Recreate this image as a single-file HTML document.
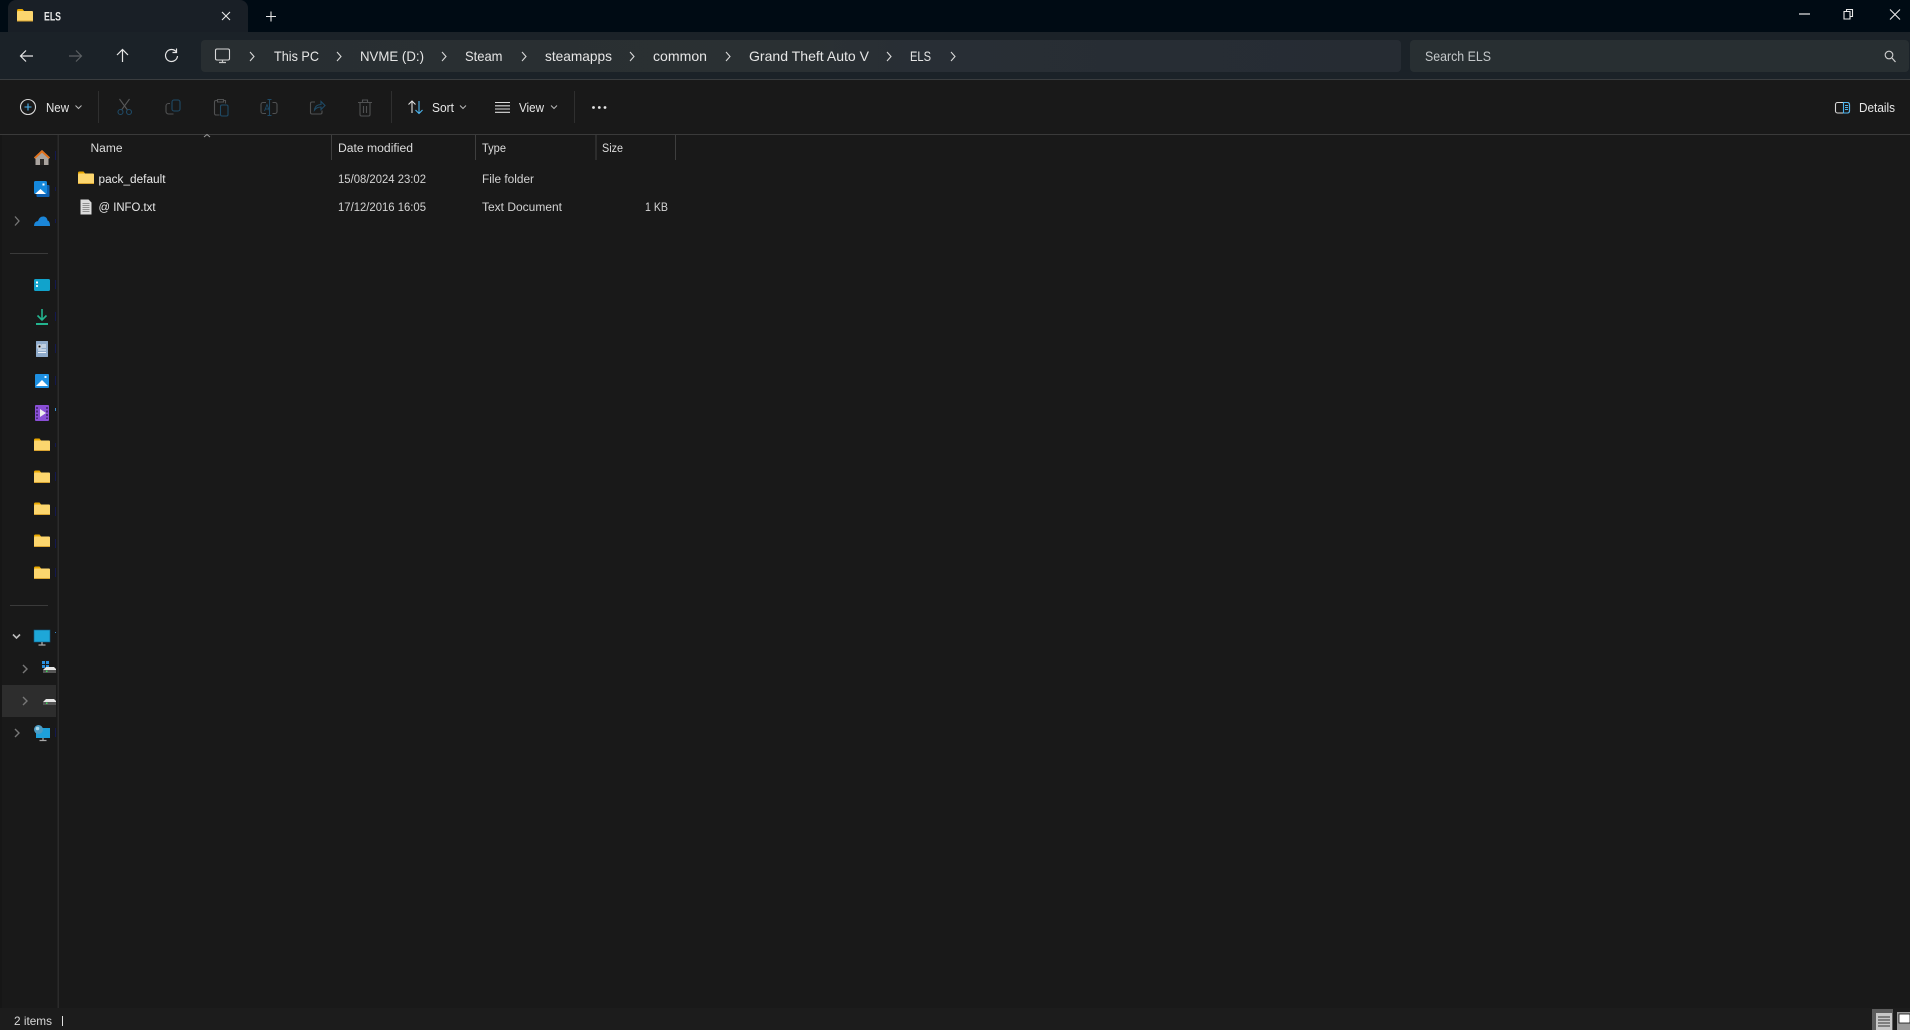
<!DOCTYPE html>
<html><head><meta charset="utf-8"><title>ELS</title>
<style>html,body{margin:0;padding:0;background:#191919;overflow:hidden}svg{display:block}text{font-family:"Liberation Sans",sans-serif}</style></head>
<body>
<svg width="1910" height="1030" viewBox="0 0 1910 1030" xmlns="http://www.w3.org/2000/svg">
<defs>
<g id="f"><path d="M0 2.500a1.500 1.500 0 0 1 1.500-1.500h4l2 2.500H0z" fill="#e9a800"/><rect x="0" y="3" width="16" height="10.500" rx="1" fill="#fcd66e"/><rect x="0" y="12.500" width="16" height="1" fill="#d9a431"/></g>
<path id="c" d="M0 0l4 4.500-4 4.500" fill="none" stroke="#d8d8d8" stroke-width="1.100"/>
<path id="d" d="M0 0l3 3 3-3" fill="none" stroke="#b8b8b8" stroke-width="1"/>
</defs>
<rect width="1910" height="1030" fill="#191919"/>
<rect width="1910" height="32" fill="#000b14"/>
<path d="M8 32V8a8 8 0 0 1 8-8h224a8 8 0 0 1 8 8v24z" fill="#191f26"/>
<use href="#f" x="17" y="8"/>
<text x="44" y="20.500" font-size="12" font-weight="700" fill="#e8e8e8" textLength="17" lengthAdjust="spacingAndGlyphs">ELS</text>
<path d="M222 12l8 8m0-8l-8 8M271 11.500v10M266 16.500h10" stroke="#e8e8e8" stroke-width="1.100" fill="none"/>
<path d="M1799 14h11" stroke="#e8e8e8" stroke-width="1.200"/>
<path d="M1844 11.500h6v7.500h-6zM1846.500 11.500v-2h6v7h-2.500" fill="none" stroke="#e8e8e8" stroke-width="1.100"/>
<path d="M1890 9.500l10 10m0-10l-10 10" stroke="#e8e8e8" stroke-width="1.100"/>

<rect y="32" width="1910" height="47" fill="#1b2228"/>
<rect y="79" width="1910" height="1" fill="#3a3d3f"/>
<path d="M33 56H21m5-5.500L20.500 56l5.500 5.500" fill="none" stroke="#e6e6e6" stroke-width="1.200"/>
<path d="M69 56h12m-5-5.500l5.500 5.500-5.500 5.500" fill="none" stroke="#5c6063" stroke-width="1.200"/>
<path d="M122.500 62V50m-5.500 5l5.500-5.500 5.500 5.500" fill="none" stroke="#e6e6e6" stroke-width="1.200"/>
<path d="M176 51.500a6 6 0 1 0 1.500 4.500M176.500 48.500v4h-4" fill="none" stroke="#e6e6e6" stroke-width="1.200"/>
<defs><linearGradient id="ag" x1="0" x2="1"><stop offset="0" stop-color="#282e31"/><stop offset=".5" stop-color="#2a3033"/><stop offset=".6" stop-color="#282e35"/><stop offset="1" stop-color="#262c33"/></linearGradient></defs>
<rect x="201" y="40" width="1200" height="32" rx="4" fill="url(#ag)"/>
<rect x="1410" y="40" width="499" height="32" rx="4" fill="#282f32"/>
<rect x="215.500" y="49" width="14" height="11" rx="1.500" fill="none" stroke="#d8d8d8" stroke-width="1.100"/>
<path d="M219 62.500h7M222.500 60V62.500" stroke="#c8c8c8" stroke-width="1.200"/>
<use href="#c" x="250" y="52"/><use href="#c" x="337" y="52"/><use href="#c" x="442" y="52"/><use href="#c" x="522" y="52"/><use href="#c" x="630" y="52"/><use href="#c" x="726" y="52"/><use href="#c" x="887" y="52"/><use href="#c" x="951" y="52"/>
<g font-size="14" fill="#e6e6e6">
<text x="274" y="61" textLength="45" lengthAdjust="spacingAndGlyphs">This PC</text>
<text x="360" y="61" textLength="64" lengthAdjust="spacingAndGlyphs">NVME (D:)</text>
<text x="465" y="61" textLength="37.500" lengthAdjust="spacingAndGlyphs">Steam</text>
<text x="545" y="61" textLength="67" lengthAdjust="spacingAndGlyphs">steamapps</text>
<text x="653" y="61" textLength="54" lengthAdjust="spacingAndGlyphs">common</text>
<text x="749" y="61" textLength="120" lengthAdjust="spacingAndGlyphs">Grand Theft Auto V</text>
<text x="910" y="61" textLength="21" lengthAdjust="spacingAndGlyphs">ELS</text>
</g>
<text x="1425" y="61" font-size="14" fill="#c4c8ca" textLength="66" lengthAdjust="spacingAndGlyphs">Search ELS</text>
<circle cx="1889" cy="55" r="3.800" fill="none" stroke="#d0d0d0" stroke-width="1.100"/><path d="M1892 58l3.500 4" stroke="#d0d0d0" stroke-width="1.200"/>

<rect y="134" width="1910" height="1" fill="#3a3a3a"/>
<circle cx="28" cy="107" r="7.500" fill="none" stroke="#d8d8d8" stroke-width="1.100"/><path d="M28 103.500v7M24.500 107h7" stroke="#4db4ee" stroke-width="1.100"/>
<g font-size="12.500" fill="#e6e6e6">
<text x="46" y="112" textLength="23" lengthAdjust="spacingAndGlyphs">New</text>
<text x="432" y="112" textLength="22" lengthAdjust="spacingAndGlyphs">Sort</text>
<text x="519" y="112" textLength="25" lengthAdjust="spacingAndGlyphs">View</text>
<text x="1859" y="112" textLength="36" lengthAdjust="spacingAndGlyphs">Details</text>
</g>
<use href="#d" x="75.500" y="105.500"/><use href="#d" x="460" y="105.500"/><use href="#d" x="551" y="105.500"/>
<path d="M98.500 91v32M391.500 91v32M574.500 91v32" stroke="#2f2f2f"/>
<g fill="none" stroke-width="1.100">
<path d="M119.500 99l8 11M129.500 99l-8 11" stroke="#565758"/><circle cx="120.500" cy="112" r="2.500" stroke="#1f4a66"/><circle cx="129" cy="112" r="2.500" stroke="#1f4a66"/>
<rect x="172" y="100" width="8" height="11" rx="2" stroke="#1f4a66"/><path d="M170 103.500h-1.500a2.500 2.500 0 0 0-2.500 2.500v5.500a2.500 2.500 0 0 0 2.500 2.500h5" stroke="#505152"/>
<path d="M217.500 100.500h-1.500a1.500 1.500 0 0 0-1.500 1.500v11.500a1.500 1.500 0 0 0 1.500 1.500h3.500M224 100.500h1.500v3M217.500 99.500h6v2.500h-6z" stroke="#505152"/><rect x="220.500" y="105" width="7.500" height="11" rx="1.500" stroke="#1f4a66"/>
<path d="M266 102.500h-3a2 2 0 0 0-2 2v7a2 2 0 0 0 2 2h3M272.500 102.500h2.500a2 2 0 0 1 2 2v7a2 2 0 0 1-2 2h-2.500" stroke="#505152"/><path d="M269.500 99.500v16M267.500 99.500h4M267.500 115.500h4" stroke="#1f4a66"/>
<path d="M264.500 111l2.500-6.500 2.500 6.500M265.300 109h3.500" stroke="#1f4a66" stroke-width=".9"/>
<path d="M315 102h-3a1.500 1.500 0 0 0-1.500 1.500v9a1.500 1.500 0 0 0 1.500 1.500h8.500a1.500 1.500 0 0 0 1.500-1.500v-2" stroke="#505152"/><path d="M314.500 110c.5-4 3.500-5.500 6.500-5.500v-3l4 4-4 4v-2.500c-3 0-5 1-6.500 3z" stroke="#1f4a66"/>
<path d="M358 102.500h14M362.500 102.500v-2.500h5v2.500M360 103v11.500a1.500 1.500 0 0 0 1.500 1.500h7a1.500 1.500 0 0 0 1.500-1.500V103M363.500 106v7M366.500 106v7" stroke="#505152"/>
</g>
<path d="M412 113v-12m-3.500 3.500l3.500-3.500 3.500 3.500" fill="none" stroke="#e0e0e0" stroke-width="1.100"/>
<path d="M419 101v12.500m-3.500-3.500l3.500 3.500 3.500-3.500" fill="none" stroke="#4db4ee" stroke-width="1.100"/>
<path d="M495 102.500h15M495 105.800h15M495 109h15M495 112.300h15" stroke="#dcdcdc" stroke-width="1.100"/>
<g fill="#e6e6e6"><circle cx="593.500" cy="107.500" r="1.400"/><circle cx="599.300" cy="107.500" r="1.400"/><circle cx="605" cy="107.500" r="1.400"/></g>
<rect x="1835.500" y="102.500" width="14" height="10.500" rx="2" fill="none" stroke="#d8d8d8" stroke-width="1.100"/>
<path d="M1843.500 102.500h4a2 2 0 0 1 2 2v6.500a2 2 0 0 1-2 2h-4zM1845 105.500h3M1845 107.500h3M1845 109.500h3" fill="none" stroke="#4db4ee" stroke-width="1.100"/>

<!-- header -->
<path d="M204 137l3-2.500 3 2.500" fill="none" stroke="#9a9a9a" stroke-width="1"/>
<path d="M331.500 135v25M475.500 135v25M596 135v25M675.500 135v25" stroke="#3e3e3e"/>
<g font-size="11.500" fill="#dcdcdc">
<text x="90.500" y="152" textLength="32" lengthAdjust="spacingAndGlyphs">Name</text>
<text x="338" y="152" textLength="75" lengthAdjust="spacingAndGlyphs">Date modified</text>
<text x="482" y="152" textLength="24" lengthAdjust="spacingAndGlyphs">Type</text>
<text x="602" y="152" textLength="21" lengthAdjust="spacingAndGlyphs">Size</text>
</g>
<use href="#f" x="78" y="170.500"/>
<path d="M80.500 199.500h8l3 3v12h-11z" fill="#dcdcdc"/><path d="M82.500 203.500h7M82.500 205.500h7M82.500 207.500h7M82.500 209.500h7M82.500 211.500h7" stroke="#777" stroke-width=".7"/>
<g font-size="11.500">
<text x="98.500" y="183" fill="#eaeaea" textLength="67" lengthAdjust="spacingAndGlyphs">pack_default</text>
<text x="98.500" y="211" fill="#eaeaea" textLength="57" lengthAdjust="spacingAndGlyphs">@ INFO.txt</text>
<g fill="#d4d4d4">
<text x="338" y="183" textLength="88" lengthAdjust="spacingAndGlyphs">15/08/2024 23:02</text>
<text x="338" y="211" textLength="88" lengthAdjust="spacingAndGlyphs">17/12/2016 16:05</text>
<text x="482" y="183" textLength="52" lengthAdjust="spacingAndGlyphs">File folder</text>
<text x="482" y="211" textLength="80" lengthAdjust="spacingAndGlyphs">Text Document</text>
<text x="645" y="211" textLength="23" lengthAdjust="spacingAndGlyphs">1 KB</text>
</g></g>

<!-- sidebar -->
<rect x="0" y="135" width="2" height="873" fill="#161616"/>
<rect x="57.500" y="135" width="1.500" height="873" fill="#2b2b2b"/>
<path d="M10 253.500h38M10 605.500h38" stroke="#3a3a3a"/>
<rect x="2" y="685" width="54" height="32" fill="#2d2d2d"/>
<path d="M42 150l-8 7.500 1.500 1.500v6h13v-6l1.500-1.500z" fill="#a9a39e"/><path d="M34 157.500l8-7.500 8 7.500-1.300 1.300-6.700-6-6.700 6z" fill="#e37119"/><rect x="40" y="159" width="4" height="6" fill="#2d2a28"/>
<rect x="36.500" y="185" width="13" height="12" rx="1" fill="#0d5fb0"/><rect x="34" y="181" width="13" height="13" rx="1.500" fill="#1588dc"/><path d="M35 194l5.500-5 5.500 5z" fill="#fff"/><rect x="42.500" y="183.500" width="2" height="2" fill="#fff"/>
<path d="M15 216.500l4 4.500-4 4.500" fill="none" stroke="#777" stroke-width="1.300"/>
<path d="M34 226q0-4.500 4-5 1.500-5 6-4.500 3 .5 3.500 4 2.500.5 2.500 5.500z" fill="#1b86d8"/>
<rect x="34" y="279" width="16" height="12" rx="1.500" fill="#11a3cc"/><rect x="36" y="281.500" width="2" height="2" fill="#fff"/><rect x="36" y="285" width="2" height="2" fill="#d6f2fa"/>
<path d="M42 309v11m-4.500-4.500l4.500 4.500 4.500-4.500" fill="none" stroke="#23b48f" stroke-width="1.600"/><rect x="36" y="323" width="12" height="2" fill="#23b48f"/>
<rect x="36" y="341" width="12" height="16" rx=".5" fill="#8fabcb"/><path d="M38 345h3v3h-3zM42 345h4M42 347h4M38 350h8M38 352.500h8" stroke="#f0f4fa" stroke-width="1"/>
<rect x="35" y="374" width="14" height="14" rx="1" fill="#1d8fe1"/><path d="M36 386l6-6 6 6z" fill="#fff"/><rect x="44.500" y="376" width="2" height="2" fill="#e0f2ff"/>
<rect x="35" y="405" width="14" height="16" rx="1" fill="#8a4fd6"/><path d="M40 409v8l6-4z" fill="#eee"/><path d="M37 407v12M47 407v12" stroke="#3a2266" stroke-width="1.500" stroke-dasharray="2 1.500"/>
<use href="#f" x="34" y="437.500"/><use href="#f" x="34" y="469.500"/><use href="#f" x="34" y="501.500"/><use href="#f" x="34" y="533.500"/><use href="#f" x="34" y="565.500"/>
<path d="M13 634.500l3.500 3.500 3.500-3.500" fill="none" stroke="#bdbdbd" stroke-width="1.600"/>
<rect x="34" y="630" width="16" height="12" fill="#1ea7d8" stroke="#0f5d86" stroke-width=".6"/><path d="M42 642v3M38.500 645h7" stroke="#a8a8a8" stroke-width="1.300"/>
<path d="M23 665l4 4-4 4M23 697l4 4-4 4M15 729l4 4-4 4" fill="none" stroke="#777" stroke-width="1.400"/>
<path d="M42 661h3v3h-3zM46 661h3v3h-3zM42 665h3v3h-3zM46 665h3v3h-3z" fill="#2a8fe0"/>
<path d="M43 670l3-3h8l2 2v1z" fill="#e6e6e6"/><rect x="43" y="670" width="13" height="3" fill="#555"/><rect x="46" y="670.500" width="1.500" height="1.500" fill="#3ddc5a"/>
<path d="M43 702l3-3h8l2 2v1z" fill="#e6e6e6"/><rect x="43" y="702" width="13" height="3" fill="#555"/><rect x="46" y="702.500" width="1.500" height="1.500" fill="#3ddc5a"/>
<rect x="36" y="728" width="14" height="10" fill="#1ea0da"/><path d="M43 738v2M39.500 740.500h7" stroke="#a8a8a8" stroke-width="1.200"/><circle cx="38.500" cy="729.500" r="4.500" fill="#4c9cc4"/><circle cx="37.500" cy="728.500" r="1.800" fill="#a9d6ea"/>
<g fill="#14194f"><rect x="55" y="151" width="1" height="9"/><rect x="55" y="187" width="1" height="4"/><rect x="55" y="219" width="1" height="4"/><rect x="55" y="280" width="1" height="9"/><rect x="55" y="312" width="1" height="9"/><rect x="55" y="344" width="1" height="9"/><rect x="55" y="376" width="1" height="9"/><rect x="55" y="408" width="1" height="3" fill="#3a8ac8"/><rect x="55" y="443" width="1" height="4"/><rect x="55" y="472" width="1" height="9"/><rect x="55" y="507" width="1" height="9"/><rect x="55" y="539" width="1" height="9"/><rect x="55" y="568" width="1" height="9"/><rect x="55" y="632" width="1" height="1" fill="#3a8ac8"/><rect x="55" y="728" width="1" height="9"/></g>

<!-- status -->
<rect y="1008" width="1910" height="22" fill="#1c1c1c"/>
<text x="14" y="1025" font-size="12" fill="#d8d8d8" textLength="38" lengthAdjust="spacingAndGlyphs">2 items</text>
<rect x="62" y="1016" width="1" height="10" fill="#e0e0e0"/>
<rect x="1872" y="1009" width="21" height="21" fill="#5c5c5c"/>
<rect x="1876" y="1013" width="16" height="17" fill="#c8c8c8"/>
<path d="M1878 1017h12M1878 1020h12M1878 1023h12M1878 1026h12" stroke="#333" stroke-width="1.100"/>
<rect x="1897" y="1012" width="13" height="18" fill="#9a9a9a"/><rect x="1899" y="1014" width="11" height="9" fill="#fff" stroke="#111" stroke-width=".8"/>
</svg>
</body></html>
